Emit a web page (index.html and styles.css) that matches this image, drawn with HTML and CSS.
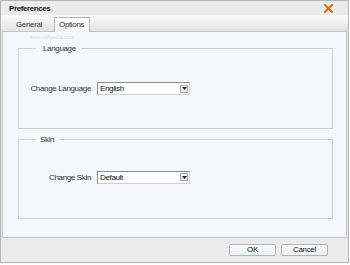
FILE: index.html
```html
<!DOCTYPE html>
<html lang="en">
<head>
    <meta charset="UTF-8">
    <title>Preferences</title>
    <link rel="stylesheet" href="styles.css">
</head>
<body>

<div class="window">
    <div class="titlebar">
        <span class="title">Preferences</span>
        <svg class="close" width="9" height="9" viewBox="0 0 9 9">
            <path d="M1 1 L8 8 M8 1 L1 8" stroke="#e0691c" stroke-width="2" stroke-linecap="square"/>
        </svg>
    </div>

    <div class="tabs">
        <div class="tab">General</div>
        <div class="tab active">Options</div>
    </div>

    <div class="panel">
        <div class="watermark">www.softpedia.com</div>

        <div class="group">
            <span class="legend">Language</span>
            <div class="row">
                <span class="label">Change Language</span>
                <div class="combo">
                    <span>English</span>
                    <span class="arrow">
                        <svg width="5" height="3" viewBox="0 0 5 3"><path d="M0 0 H5 L2.5 3 Z" fill="#222"/></svg>
                    </span>
                </div>
            </div>
        </div>

        <div class="group skin">
            <span class="legend skin-legend">Skin</span>
            <div class="row">
                <span class="label">Change Skin</span>
                <div class="combo">
                    <span>Default</span>
                    <span class="arrow">
                        <svg width="5" height="3" viewBox="0 0 5 3"><path d="M0 0 H5 L2.5 3 Z" fill="#222"/></svg>
                    </span>
                </div>
            </div>
        </div>
    </div>

    <div class="buttons">
        <button class="btn">OK</button>
        <button class="btn">Cancel</button>
    </div>
</div>

</body>
</html>
```

FILE: styles.css
```css
body {
    margin: 0;
    background: #fff;
    font-family: "Liberation Sans", Arial, sans-serif;
    font-size: 8px;
    letter-spacing: -0.35px;
    color: #222;
}
.window {
    width: 347px;
    height: 261px;
    border: 1px solid #b4b4b4;
    background: #ebebeb;
    display: flex;
    flex-direction: column;
}
.titlebar {
    height: 14px;
    display: flex;
    align-items: center;
    justify-content: space-between;
    padding: 0 15px 0 8px;
    background: #ebebeb;
}
.title {
    font-weight: bold;
    font-size: 8px;
    letter-spacing: -0.4px;
    color: #1a1a1a;
}
.close {
    display: block;
}
.tabs {
    height: 16px;
    display: flex;
    align-items: flex-end;
    padding-left: 3px;
    background: linear-gradient(#fbfbfb, #e3e3e3);
}
.tab {
    height: 13px;
    line-height: 13px;
    padding: 0 11px 0 11px;
    border: 1px solid transparent;
    border-bottom: 0;
    color: #333;
}
.tab.active {
    padding: 0 5px 0 4px;
    border-color: #b3b3b3;
    background: linear-gradient(#ffffff, #f3f8fd);
    margin-bottom: -1px;
    height: 14px;
    position: relative;
    z-index: 1;
}
.panel {
    height: 205px;
    margin: 0 1px;
    border: 1px solid #c4c4c4;
    background: #f4f8fd;
    padding: 0 13px 0 15px;
    position: relative;
}
.watermark {
    position: absolute;
    left: 27px;
    top: 2px;
    font-size: 5px;
    letter-spacing: 0;
    color: #d6dbe2;
}
.group {
    position: relative;
    margin-top: 16px;
    height: 79px;
    border: 1px solid #cdcdcd;
    box-shadow: inset 1px 1px 0 #fff, 1px 1px 0 #fff;
    display: flex;
    align-items: center;
}
.group.skin {
    margin-top: 10px;
    height: 78px;
    padding-bottom: 4px;
    box-sizing: border-box;
    height: 80px;
}
.legend {
    position: absolute;
    top: -5px;
    left: 17px;
    padding: 0 5px 0 7px;
    line-height: 9px;
    background: #f4f8fd;
    color: #333;
}
.legend.skin-legend {
    padding: 0 5px 0 4px;
}
.row {
    display: flex;
    align-items: center;
    gap: 6px;
}
.label {
    width: 72px;
    text-align: right;
    color: #333;
}
.combo {
    width: 88px;
    height: 11px;
    border: 1px solid #8c8c8c;
    border-right-color: #d0d0d0;
    border-bottom-color: #d0d0d0;
    background: #fff;
    display: flex;
    align-items: center;
    justify-content: space-between;
    padding: 0 1px 0 2px;
    color: #111;
}
.arrow {
    width: 8px;
    height: 8px;
    border: 1px solid #a8a8a8;
    background: linear-gradient(#fdfdfd, #e2e2e2);
    display: flex;
    align-items: center;
    justify-content: center;
    box-sizing: border-box;
}
.arrow svg {
    display: block;
}
.buttons {
    flex: 1;
    display: flex;
    justify-content: flex-end;
    align-items: center;
    gap: 5px;
    padding-right: 20px;
    background: #ebebeb;
}
.btn {
    width: 47px;
    height: 12px;
    padding: 0;
    border: 1px solid #b4b4b4;
    border-radius: 2px;
    background: linear-gradient(#f8fbff, #eaf2fb);
    font-family: "Liberation Sans", Arial, sans-serif;
    font-size: 8px;
    letter-spacing: -0.35px;
    color: #222;
    line-height: 10px;
}
```
